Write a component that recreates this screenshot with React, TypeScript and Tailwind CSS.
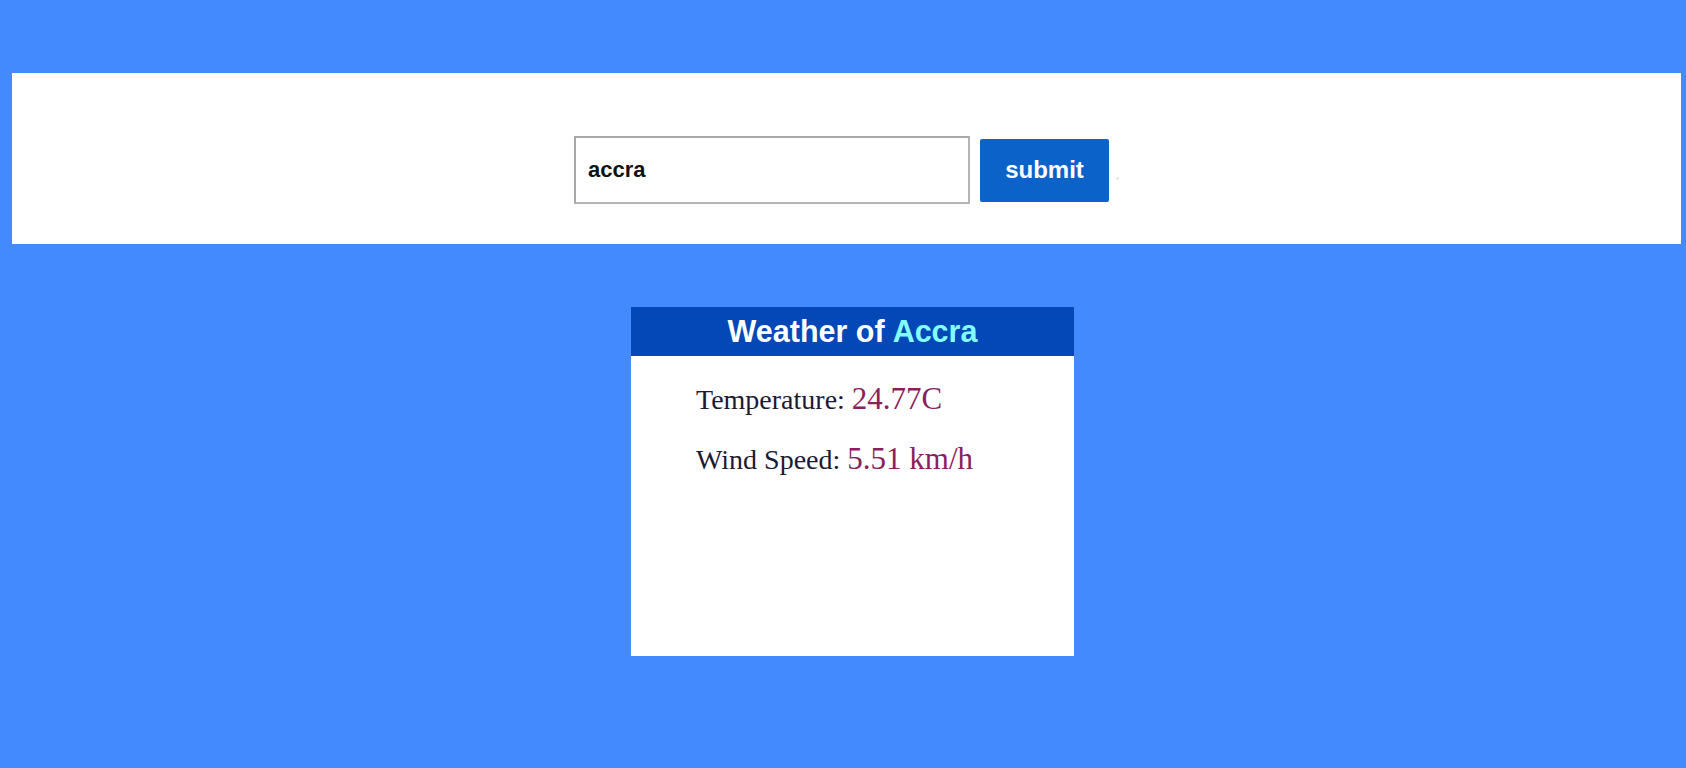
export default function App() {
  return (
    <div className="min-h-[768px] w-full bg-[#448aff] pt-[73px] pb-[112px]" style={{ fontFamily: '"Liberation Sans", Arial, sans-serif' }}>
      {/* search bar */}
      <div className="ml-[12px] mr-[5px] h-[171px] bg-white pt-[63px] pl-[562px]">
        <form className="flex items-center" onSubmit={(e) => e.preventDefault()}>
          <input
            defaultValue="accra"
            className="h-[68px] w-[396px] border-2 border-[#b4b4b4] border-t-[#a8a8a8] border-l-[#a8a8a8] bg-white px-[12px] text-[22px] font-bold text-[#111] outline-none"
          />
          <button
            type="submit"
            className="ml-[10px] h-[63px] w-[129px] rounded-[2px] bg-[#0b63c9] text-[24px] font-bold text-white"
          >
            submit
          </button>
          <span className="ml-[7px] mt-[16px] h-[3px] w-[3px] rounded-full bg-[#e4e8ee]" />
        </form>
      </div>

      {/* weather card */}
      <div className="mt-[63px] flex justify-center pl-[19px]">
        <div className="h-[349px] w-[443px] bg-white">
          <div className="flex h-[49px] items-center justify-center bg-[#0447b6] text-[30.5px] font-bold text-white">
            Weather of <span className="ml-[8px] text-[#84ffff]">Accra</span>
          </div>
          <div className="pl-[65px] pt-[23px] text-[#1c1a33]" style={{ fontFamily: '"Liberation Serif", "Times New Roman", serif' }}>
            <p className="text-[28px] leading-[40px]">
              Temperature: <span className="text-[31px] text-[#8a1f5e]">24.77C</span>
            </p>
            <p className="mt-[19px] text-[28px] leading-[40px]">
              Wind Speed: <span className="text-[31px] text-[#8a1f5e]">5.51 km/h</span>
            </p>
          </div>
        </div>
      </div>
    </div>
  );
}
